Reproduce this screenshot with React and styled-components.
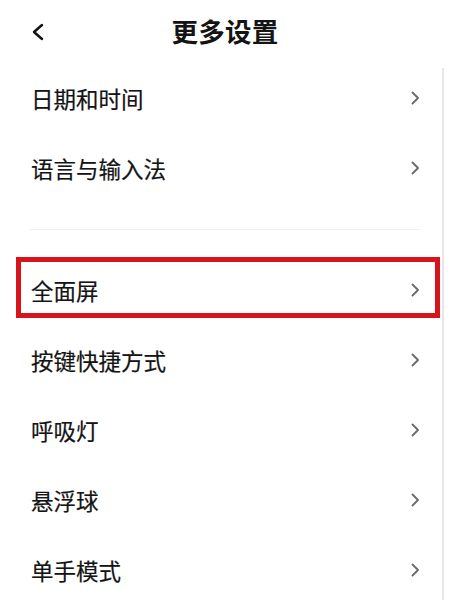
import React from "react";
import styled, { createGlobalStyle } from "styled-components";

const Global = createGlobalStyle`
  html, body { margin: 0; padding: 0; background: #ffffff; }
  body { font-family: "Noto Sans CJK SC", "Noto Sans", sans-serif; color: #161616; }
  #root { width: 450px; height: 600px; overflow: hidden; }
`;

const Page = styled.div`
  position: relative;
  width: 450px;
  height: 600px;
  overflow: hidden;
  background: #fff;
`;

const Header = styled.header`
  height: 65px;
  display: grid;
  grid-template-columns: 80px 1fr 80px;
  align-items: center;
`;

const BackButton = styled.div`
  display: flex;
  align-items: center;
  padding-left: 31px;
  margin-top: -2px;
`;

const Title = styled.h1`
  margin: -3px 0 0 0;
  text-align: center;
  font-size: 26.5px;
  font-weight: 700;
  letter-spacing: 0.2px;
  line-height: 1;
  color: #141414;
`;

const List = styled.div`
  display: flex;
  flex-direction: column;
`;

const Row = styled.div`
  position: relative;
  height: 70px;
  display: flex;
  align-items: center;
  justify-content: space-between;
  padding: 0 30px 0 31px;

  ${(p) =>
    p.$highlight &&
    `
    &::after {
      content: "";
      position: absolute;
      left: 16px;
      right: 10px;
      top: 0;
      height: 61px;
      box-sizing: border-box;
      border: 5px solid #d7141c;
    }
  `}
`;

const Label = styled.span`
  font-size: 22.5px;
  line-height: 1;
  color: #141414;
  position: relative;
  top: -2px;
  -webkit-text-stroke: 0.2px #141414;
`;

const Divider = styled.div`
  height: 52px;
  display: flex;
  align-items: flex-start;
  padding: 24px 30px 0 30px;
  box-sizing: border-box;

  &::before {
    content: "";
    flex: 1;
    height: 1px;
    background: #efefef;
  }
`;

const ScrollThumb = styled.div`
  position: absolute;
  right: 6px;
  top: 68px;
  bottom: 0;
  width: 2px;
  background: #e7e7e7;
`;

const ChevronWrap = styled.span`
  display: flex;
  position: relative;
  top: -2px;
`;

const Chevron = () => (
  <ChevronWrap>
    <svg width="9" height="14" viewBox="0 0 9 14">
      <polyline
        points="1.5,1.5 7,7 1.5,12.5"
        fill="none"
        stroke="#6c6c6c"
        strokeWidth="1.9"
        strokeLinecap="round"
        strokeLinejoin="round"
      />
    </svg>
  </ChevronWrap>
);

const BackIcon = () => (
  <svg width="14" height="18" viewBox="0 0 14 18">
    <polyline
      points="11,2 3,9 11,16"
      fill="none"
      stroke="#111"
      strokeWidth="2.4"
      strokeLinecap="round"
      strokeLinejoin="round"
    />
  </svg>
);

const groupA = ["日期和时间", "语言与输入法"];
const groupB = ["全面屏", "按键快捷方式", "呼吸灯", "悬浮球", "单手模式"];

export default function App() {
  return (
    <>
      <Global />
      <Page>
        <Header>
          <BackButton>
            <BackIcon />
          </BackButton>
          <Title>更多设置</Title>
          <div />
        </Header>
        <List>
          {groupA.map((t) => (
            <Row key={t}>
              <Label>{t}</Label>
              <Chevron />
            </Row>
          ))}
          <Divider />
          {groupB.map((t, i) => (
            <Row key={t} $highlight={i === 0}>
              <Label>{t}</Label>
              <Chevron />
            </Row>
          ))}
        </List>
        <ScrollThumb />
      </Page>
    </>
  );
}
